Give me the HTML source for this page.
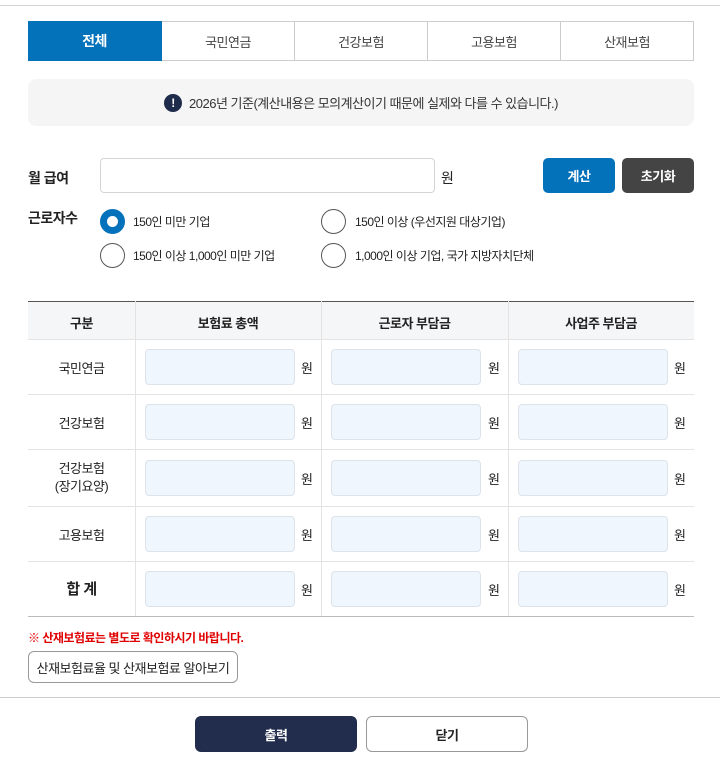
<!DOCTYPE html>
<html><head><meta charset="utf-8"><style>
*{box-sizing:border-box;margin:0;padding:0}
body{width:720px;height:762px;background:#fff;font-family:"Liberation Sans","Noto Sans CJK KR",sans-serif;color:#222;position:relative;overflow:hidden;font-size:13px;letter-spacing:-0.5px}
.a{position:absolute}
.tab{position:absolute;top:21px;height:40px;border:1px solid #ccc;border-left:none;display:flex;align-items:center;justify-content:center;font-size:13px;color:#444}
.inp{position:absolute;width:150px;height:36px;background:#f0f6fd;border:1px solid #dde3ea;border-radius:4px}
.won{position:absolute;font-size:13px}
.rad{position:absolute;width:25px;height:25px;border:1px solid #555;border-radius:50%}
.rl{position:absolute;font-size:12px}
.hl{position:absolute;left:28px;width:666px;height:1px;background:#e3e3e3}
.vl{position:absolute;top:301px;width:1px;height:315px;background:#e3e3e3}
.rh{position:absolute;left:28px;width:107px;text-align:center;font-size:13px}
</style></head><body>
<div class="a" style="left:0;top:5px;width:720px;height:1px;background:#d5d5d5"></div>
<div class="tab" style="left:28px;width:134px;background:#0472ba;border-color:#0472ba;color:#fff;font-weight:bold;font-size:14px">전체</div>
<div class="tab" style="left:162px;width:133px">국민연금</div>
<div class="tab" style="left:295px;width:133px">건강보험</div>
<div class="tab" style="left:428px;width:133px">고용보험</div>
<div class="tab" style="left:561px;width:133px">산재보험</div>
<div class="a" style="left:28px;top:79px;width:666px;height:47px;background:#f5f5f5;border-radius:8px;display:flex;align-items:center;justify-content:center;font-size:13px;color:#333"><span style="display:inline-block;width:18px;height:18px;border-radius:50%;background:#1f2b4a;color:#fff;font-weight:bold;text-align:center;line-height:18px;font-size:12px;margin-right:7px">!</span>2026년 기준(계산내용은 모의계산이기 때문에 실제와 다를 수 있습니다.)</div>
<div class="a" style="left:28px;top:168px;font-size:14px;font-weight:bold">월 급여</div>
<div class="a" style="left:100px;top:158px;width:335px;height:35px;border:1px solid #d5d5d5;border-radius:4px"></div>
<div class="a" style="left:441px;top:168px;font-size:14px">원</div>
<div class="a" style="left:543px;top:158px;width:72px;height:35px;background:#0472ba;border-radius:5px;color:#fff;font-weight:bold;display:flex;align-items:center;justify-content:center">계산</div>
<div class="a" style="left:622px;top:158px;width:72px;height:35px;background:#444;border-radius:5px;color:#fff;font-weight:bold;display:flex;align-items:center;justify-content:center">초기화</div>
<div class="a" style="left:28px;top:208px;font-size:14px;font-weight:bold">근로자수</div>
<div class="rad" style="left:100px;top:209px;border:7px solid #0472ba"></div>
<div class="rl" style="left:133px;top:213px">150인 미만 기업</div>
<div class="rad" style="left:321px;top:209px"></div>
<div class="rl" style="left:355px;top:213px">150인 이상 (우선지원 대상기업)</div>
<div class="rad" style="left:100px;top:243px"></div>
<div class="rl" style="left:133px;top:247px">150인 이상 1,000인 미만 기업</div>
<div class="rad" style="left:321px;top:243px"></div>
<div class="rl" style="left:355px;top:247px">1,000인 이상 기업, 국가 지방자치단체</div>
<div class="a" style="left:28px;top:301px;width:666px;height:38px;background:#f5f6f8;border-top:1px solid #555"></div>
<div class="hl" style="top:339px"></div><div class="hl" style="top:394px"></div><div class="hl" style="top:449px"></div><div class="hl" style="top:506px"></div><div class="hl" style="top:561px"></div>
<div class="hl" style="top:616px;background:#bbb"></div>
<div class="vl" style="left:135px"></div><div class="vl" style="left:321px"></div><div class="vl" style="left:508px"></div>
<div class="a" style="top:313px;left:28px;width:107px;text-align:center;font-weight:bold">구분</div>
<div class="a" style="top:313px;left:135px;width:186px;text-align:center;font-weight:bold">보험료 총액</div>
<div class="a" style="top:313px;left:321px;width:187px;text-align:center;font-weight:bold">근로자 부담금</div>
<div class="a" style="top:313px;left:508px;width:186px;text-align:center;font-weight:bold">사업주 부담금</div>
<div class="rh" style="top:358px">국민연금</div>
<div class="rh" style="top:413px">건강보험</div>
<div class="rh" style="top:460px;line-height:18px">건강보험<br>(장기요양)</div>
<div class="rh" style="top:525px">고용보험</div>
<div class="rh" style="top:578px;font-size:15px;font-weight:bold">합 계</div>
<div class="inp" style="left:145px;top:349px"></div><div class="won" style="left:301px;top:358px">원</div>
<div class="inp" style="left:331px;top:349px"></div><div class="won" style="left:488px;top:358px">원</div>
<div class="inp" style="left:518px;top:349px"></div><div class="won" style="left:674px;top:358px">원</div>
<div class="inp" style="left:145px;top:404px"></div><div class="won" style="left:301px;top:413px">원</div>
<div class="inp" style="left:331px;top:404px"></div><div class="won" style="left:488px;top:413px">원</div>
<div class="inp" style="left:518px;top:404px"></div><div class="won" style="left:674px;top:413px">원</div>
<div class="inp" style="left:145px;top:460px"></div><div class="won" style="left:301px;top:469px">원</div>
<div class="inp" style="left:331px;top:460px"></div><div class="won" style="left:488px;top:469px">원</div>
<div class="inp" style="left:518px;top:460px"></div><div class="won" style="left:674px;top:469px">원</div>
<div class="inp" style="left:145px;top:516px"></div><div class="won" style="left:301px;top:525px">원</div>
<div class="inp" style="left:331px;top:516px"></div><div class="won" style="left:488px;top:525px">원</div>
<div class="inp" style="left:518px;top:516px"></div><div class="won" style="left:674px;top:525px">원</div>
<div class="inp" style="left:145px;top:571px"></div><div class="won" style="left:301px;top:580px">원</div>
<div class="inp" style="left:331px;top:571px"></div><div class="won" style="left:488px;top:580px">원</div>
<div class="inp" style="left:518px;top:571px"></div><div class="won" style="left:674px;top:580px">원</div>
<div class="a" style="left:28px;top:629px;color:#e00000;font-weight:bold;font-size:12px">※ 산재보험료는 별도로 확인하시기 바랍니다.</div>
<div class="a" style="left:28px;top:651px;width:210px;height:32px;border:1px solid #999;border-radius:6px;display:flex;align-items:center;justify-content:center;font-size:13px">산재보험료율 및 산재보험료 알아보기</div>
<div class="a" style="left:0;top:697px;width:720px;height:1px;background:#ccc"></div>
<div class="a" style="left:195px;top:716px;width:162px;height:36px;background:#222d4d;border-radius:6px;color:#fff;font-weight:bold;display:flex;align-items:center;justify-content:center">출력</div>
<div class="a" style="left:366px;top:716px;width:162px;height:36px;border:1px solid #999;border-radius:6px;font-weight:bold;display:flex;align-items:center;justify-content:center">닫기</div>
</body></html>
